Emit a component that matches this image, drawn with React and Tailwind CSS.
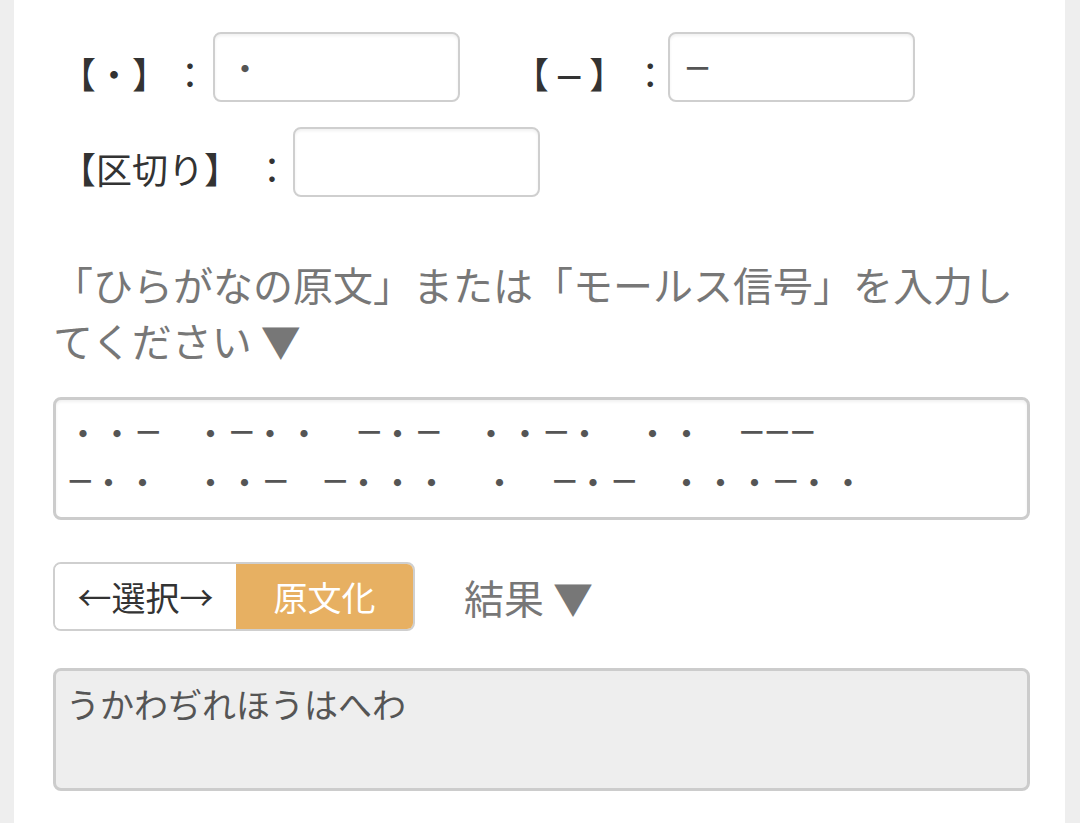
import { useState } from 'react';

const MORSE_IN =
  '・・−　・−・・　−・−　・・−・　・・　−−−\n−・・　・・−　−・・・　・　−・−　・・・−・・';

const inputCls =
  "h-[70px] w-[247px] rounded-[8px] border-2 border-[#cfcfcf] bg-white px-[13px] text-[34px] text-[#555] outline-none shadow-[inset_0_2px_3px_rgba(0,0,0,0.06)]";

// dashes come from DejaVu (narrower than a full-width char) and sit a bit higher
const renderMorse = (s) =>
  s.split('').map((c, i) =>
    c === '−' ? (
      <span key={i} className="align-[4px] font-['DejaVu_Sans',sans-serif] leading-none tracking-[-3px]">
        −
      </span>
    ) : (
      c
    )
  );

const App = () => {
  const [dot, setDot] = useState('・');
  const [dash, setDash] = useState('−');
  const [sep, setSep] = useState('');

  return (
    <div className="min-h-screen bg-[#eeeeee] pl-[14px] pr-[15px] font-['Noto_Sans_CJK_JP',sans-serif]">
      <div className="min-h-screen bg-white pl-[39px] pr-[35px] pt-[32px]">
        {/* 記号の設定 */}
        <div className="flex h-[70px] items-start text-[36px] leading-[50px] text-[#333]">
          <span className="ml-[7px] mt-[16px]">
            【・】
          </span>
          <span className="ml-[4px] mt-[16px]">：</span>
          <input className={`ml-[5px] ${inputCls}`} value={dot} onChange={(e) => setDot(e.target.value)} />
          <span className="ml-[53px] mt-[16px]">
            【<span className="mx-[5px] font-['DejaVu_Sans',sans-serif]">−</span>】
          </span>
          <span className="ml-[7px] mt-[16px]">：</span>
          <input
            className={`font-['DejaVu_Sans','Noto_Sans_CJK_JP',sans-serif] ${inputCls}`}
            value={dash}
            onChange={(e) => setDash(e.target.value)}
          />
        </div>
        <div className="mt-[25px] flex h-[70px] items-start text-[36px] leading-[50px] text-[#333]">
          <span className="ml-[7px] mt-[16px]">【区切り】</span>
          <span className="ml-[14px] mt-[16px]">：</span>
          <input className={`ml-[3px] ${inputCls}`} value={sep} onChange={(e) => setSep(e.target.value)} />
        </div>

        <p className="mt-[59px] text-[40px] leading-[56px] text-[#777]">
          「ひらがなの原文」または「モールス信号」を入力してください ▼
        </p>

        <div
          role="textbox"
          contentEditable
          suppressContentEditableWarning
          className="mt-[29px] h-[123px] w-full overflow-hidden whitespace-pre-wrap rounded-[8px] border-[3px] border-[#cccccc] bg-white pl-[10px] pt-[8px] text-[34px] leading-[49px] text-[#555] outline-none shadow-[inset_0_2px_3px_rgba(0,0,0,0.06)]"
        >
          {renderMorse(MORSE_IN)}
        </div>

        <div className="mt-[42px] flex items-center">
          <div className="flex h-[69px] w-[362px] overflow-hidden rounded-[8px] border-2 border-[#cfcfcf] text-[34px]">
            <button className="w-[181px] bg-white text-[#333]">←選択→</button>
            <button className="flex-1 bg-[#e7b062] text-white">原文化</button>
          </div>
          <span className="ml-[49px] text-[40px] text-[#777]">結果 ▼</span>
        </div>

        <textarea
          readOnly
          className="mt-[37px] block h-[123px] w-full resize-none rounded-[8px] border-[3px] border-[#cccccc] bg-[#eeeeee] pl-[10px] pt-[8px] text-[34px] leading-[49px] text-[#555] outline-none"
          value="うかわぢれほうはへわ"
        />
      </div>
    </div>
  );
};

export default App;
